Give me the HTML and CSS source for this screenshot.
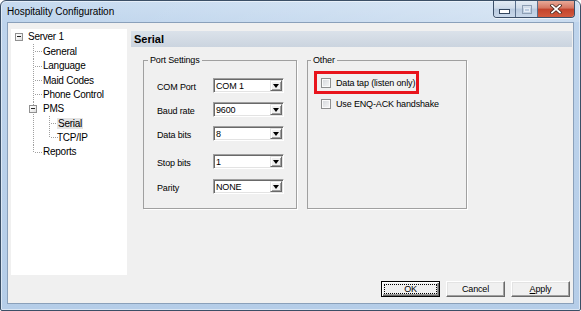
FILE: index.html
```html
<!DOCTYPE html>
<html>
<head>
<meta charset="utf-8">
<link rel="stylesheet" href="styles.css">
</head>
<body>
<div class="window">
  <div class="titlebar">
    <span class="title">Hospitality Configuration</span>
    <div class="caption">
      <span class="cbtn min"><svg width="11" height="5" viewBox="0 0 11 5"><rect x="0.5" y="0.5" width="10" height="4" fill="#fff" stroke="#34465e"/></svg></span>
      <span class="cbtn max"><svg width="10" height="9" viewBox="0 0 10 9"><rect x="0.5" y="0.5" width="9" height="8" fill="none" stroke="#8e9fb4"/><rect x="2.5" y="3.5" width="5" height="3" fill="none" stroke="#e6edf5"/></svg></span>
      <span class="cbtn close"><svg width="12" height="10" viewBox="0 0 12 10"><path d="M2 1.5 L10 8.5 M10 1.5 L2 8.5" stroke="#4a2a22" stroke-width="3.4" stroke-linecap="square"/><path d="M2 1.5 L10 8.5 M10 1.5 L2 8.5" stroke="#fff" stroke-width="1.7" stroke-linecap="square"/></svg></span>
    </div>
  </div>
  <div class="client">
    <div class="main">
      <div class="tree">
        <div class="row root"><span class="expander"></span><span>Server 1</span></div>
        <ul class="children">
          <li><div class="row leaf">General</div></li>
          <li><div class="row leaf">Language</div></li>
          <li><div class="row leaf">Maid Codes</div></li>
          <li><div class="row leaf">Phone Control</div></li>
          <li>
            <div class="row branch"><span class="expander"></span><span>PMS</span></div>
            <ul class="children sub">
              <li><div class="row leaf"><span class="selected">Serial</span></div></li>
              <li class="last"><div class="row leaf">TCP/IP</div></li>
            </ul>
          </li>
          <li class="last"><div class="row leaf">Reports</div></li>
        </ul>
      </div>
      <div class="pane">
        <div class="pane-header">Serial</div>
        <div class="groups">
          <fieldset class="group port">
            <legend>Port Settings</legend>
            <div class="port-body">
              <div class="frow"><span class="flabel">COM Port</span><span class="combo"><span class="combo-val">COM 1</span><span class="combo-btn"><span class="tri"></span></span></span></div>
              <div class="frow"><span class="flabel">Baud rate</span><span class="combo"><span class="combo-val">9600</span><span class="combo-btn"><span class="tri"></span></span></span></div>
              <div class="frow"><span class="flabel">Data bits</span><span class="combo"><span class="combo-val">8</span><span class="combo-btn"><span class="tri"></span></span></span></div>
              <div class="frow r4"><span class="flabel">Stop bits</span><span class="combo"><span class="combo-val">1</span><span class="combo-btn"><span class="tri"></span></span></span></div>
              <div class="frow r5"><span class="flabel">Parity</span><span class="combo"><span class="combo-val">NONE</span><span class="combo-btn"><span class="tri"></span></span></span></div>
            </div>
          </fieldset>
          <fieldset class="group other">
            <legend>Other</legend>
            <div class="other-body">
              <div class="mark"><span class="check"><span class="cb"></span><span>Data tap (listen only)</span></span></div>
              <div class="check check2"><span class="cb"></span><span>Use ENQ-ACK handshake</span></div>
            </div>
          </fieldset>
        </div>
      </div>
    </div>
    <div class="footer">
      <button class="btn default">OK</button>
      <button class="btn">Cancel</button>
      <button class="btn"><u>A</u>pply</button>
    </div>
  </div>
</div>
</body>
</html>
```
FILE: styles.css
```css
* { box-sizing: border-box; }
html, body { margin: 0; padding: 0; }
body {
  width: 581px;
  height: 311px;
  overflow: hidden;
  background: #fff;
  font-family: "Liberation Sans", Arial, sans-serif;
  color: #000;
}
.window {
  width: 581px;
  height: 311px;
  border: 1px solid #3b4f66;
  border-radius: 6px 6px 2px 2px;
  background: linear-gradient(180deg, #c7dbf0 0, #bed4ec 22px, #b5cde8 100%);
  box-shadow: inset 0 0 0 1px rgba(255, 255, 255, 0.5);
  display: flex;
  flex-direction: column;
  padding: 0 6px 6px 6px;
}
.titlebar {
  height: 21px;
  display: flex;
  align-items: flex-start;
  background: linear-gradient(90deg, rgba(255,255,255,0) 0, rgba(255,255,255,0.18) 55%, rgba(255,255,255,0.3) 85%, rgba(255,255,255,0.15) 100%);
  margin: 0 -6px 0 -6px;
  padding: 0 5px 0 6px;
}
.title {
  font-size: 10px;
  line-height: 21px;
  letter-spacing: -0.05px;
}
.caption {
  margin-left: auto;
  display: flex;
  height: 17px;
  border: 1px solid #3c4f68;
  border-top: 0;
  border-radius: 0 0 4px 4px;
  overflow: hidden;
  box-shadow: 0 1px 0 rgba(255,255,255,0.6);
}
.cbtn {
  display: flex;
  align-items: center;
  justify-content: center;
  height: 16px;
}
.cbtn + .cbtn { border-left: 1px solid #5a6f8c; }
.cbtn.min {
  width: 21px;
  padding-top: 4px;
  background: linear-gradient(180deg, #e3ebf4 0, #cfdbe9 45%, #b9cadf 50%, #c9d8ea 100%);
}
.cbtn.max {
  width: 22px;
  background: linear-gradient(180deg, #e3ebf4 0, #cfdbe9 45%, #b9cadf 50%, #c9d8ea 100%);
}
.cbtn.close {
  width: 37px;
  background: linear-gradient(180deg, #e9a997 0, #d57560 45%, #c3432c 50%, #d25a3e 100%);
}
.client {
  flex: 1;
  border: 1px solid #8aa0ba;
  background: #f0f0f0;
  padding: 6px 1px 6px 3px;
  display: flex;
  flex-direction: column;
}
.main {
  display: flex;
  height: 246px;
}
.tree {
  width: 116px;
  margin-right: 4px;
  background: #fff;
  padding: 0.8px 0 0 4px;
  font-size: 10px;
  letter-spacing: -0.25px;
}
.tree ul { list-style: none; margin: 0; padding: 0; }
.row {
  height: 14.375px;
  display: flex;
  align-items: center;
  white-space: nowrap;
}
.expander {
  width: 8px;
  height: 8px;
  border: 1px solid #919191;
  background: linear-gradient(135deg, #fff 0, #f2f2f2 50%, #dcdcdc 100%);
  display: flex;
  align-items: center;
  justify-content: center;
  flex: none;
}
.expander::before {
  content: "";
  width: 4px;
  height: 1px;
  background: #222;
}
.root .expander { margin-right: 5px; }
.children { margin-left: 18px !important; }
.children li {
  background: repeating-linear-gradient(180deg, #a0a0a0 0 1px, transparent 1px 2px) 0 0 / 1px 100% no-repeat;
}
.children li.last {
  background-size: 1px 7px;
}
.row.leaf {
  padding-left: 10px;
  background: repeating-linear-gradient(90deg, #a0a0a0 0 1px, transparent 1px 2px) 2px 7px / 7px 1px no-repeat;
}
.row.branch .expander {
  margin-left: -4px;
  margin-right: 6px;
}
.children.sub { margin-left: 16px !important; }
.sub .row.leaf { padding-left: 8px; }
.selected {
  background: #e4e4e4;
  padding: 0 1px;
}
.pane { flex: 1; }
.pane-header {
  height: 16px;
  margin-top: 2px;
  padding-left: 3px;
  font-size: 11px;
  font-weight: bold;
  line-height: 16px;
  background: linear-gradient(180deg, #dbe2ea 0, #cbd4df 100%);
}
.groups {
  display: flex;
  gap: 10px;
  margin-top: 8px;
  padding-left: 12px;
  font-size: 9px;
  letter-spacing: -0.15px;
}
.group {
  margin: 0;
  padding: 0;
  min-width: 0;
  height: 154px;
  border: 1px solid #a0a0a0;
  box-shadow: 1px 1px 0 #fff;
}
.group legend {
  padding: 0 2px;
  margin-left: 4px;
  line-height: 11px;
}
.group.other legend { margin-left: 3px; }
.port { width: 154px; }
.other { width: 160px; }
.port-body { padding: 12px 0 0 13px; }
.frow {
  display: flex;
  align-items: center;
  height: 15px;
}
.frow + .frow { margin-top: 9px; }
.frow.r4 { margin-top: 13px; }
.frow.r5 { margin-top: 10px; }
.flabel { width: 56px; padding-top: 2px; }
.combo {
  width: 71px;
  height: 15px;
  display: flex;
  align-items: center;
  background: #fff;
  border: 1px solid;
  border-color: #a0a0a0 #fff #fff #a0a0a0;
  box-shadow: inset 1px 1px 0 #696969, inset -1px -1px 0 #e3e3e3;
}
.combo-val { flex: 1; padding-left: 2px; padding-top: 1px; }
.combo-btn {
  width: 12px;
  height: 11px;
  margin-right: 1px;
  background: #f0f0f0;
  border: 1px solid;
  border-color: #e3e3e3 #696969 #696969 #e3e3e3;
  box-shadow: inset 1px 1px 0 #fff, inset -1px -1px 0 #a0a0a0;
  display: flex;
  align-items: center;
  justify-content: center;
}
.tri {
  width: 0;
  height: 0;
  border-left: 3.5px solid transparent;
  border-right: 3.5px solid transparent;
  border-top: 4px solid #000;
  margin-top: 1px;
}
.other-body { padding: 5px 0 0 6px; }
.mark {
  width: 105px;
  height: 23px;
  border: 3px solid #e8141c;
  padding-left: 4px;
  display: flex;
  align-items: center;
}
.check {
  display: flex;
  align-items: center;
  white-space: nowrap;
}
.cb {
  width: 10px;
  height: 10px;
  margin-right: 5px;
  border: 1px solid #8e8f8f;
  background: linear-gradient(135deg, #d3d6da 0, #f7f7f7 100%);
  box-shadow: inset 0 0 0 1px #fafafa;
  flex: none;
}
.check2 {
  margin-top: 4px;
  height: 12px;
  padding-left: 7px;
}
.footer {
  display: flex;
  justify-content: flex-end;
  gap: 6px;
  margin-top: 6px;
  padding-right: 2px;
}
.btn {
  width: 59px;
  height: 16px;
  padding: 0;
  font-family: "Liberation Sans", Arial, sans-serif;
  font-size: 9px;
  letter-spacing: -0.15px;
  color: #000;
  background: #f0f0f0;
  border: 1px solid;
  border-color: #fff #696969 #696969 #fff;
  box-shadow: inset -1px -1px 0 #a0a0a0, inset 1px 1px 0 #e3e3e3;
  border-radius: 0;
}
.btn.default {
  border: 1px solid #000;
  box-shadow: inset 1px 1px 0 #fff, inset -1px -1px 0 #696969, inset -2px -2px 0 #a0a0a0;
  outline: 1px dotted #000;
  outline-offset: -4px;
}
```
